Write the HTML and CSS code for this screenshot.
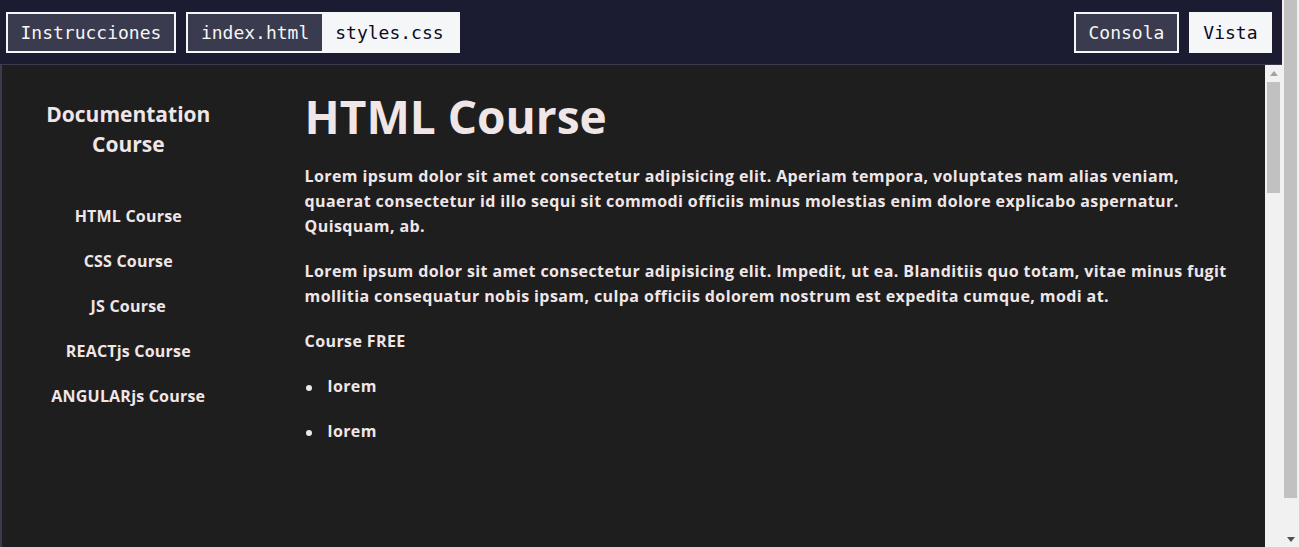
FILE: index.html
```html
<!DOCTYPE html>
<html lang="es">
<head>
<meta charset="utf-8">
<title>Documentation Course</title>
<link rel="stylesheet" href="styles.css">
</head>
<body>
<div class="app">
  <div class="workspace">
    <header class="topbar">
      <div class="group">
        <button class="btn btn-dark">Instrucciones</button>
        <div class="tabs">
          <span class="tab tab-dark">index.html</span>
          <span class="tab tab-light">styles.css</span>
        </div>
      </div>
      <div class="group">
        <button class="btn btn-dark">Consola</button>
        <button class="btn btn-light">Vista</button>
      </div>
    </header>
    <section class="preview">
      <div class="page">
        <aside class="sidebar">
          <h2 class="side-title">Documentation Course</h2>
          <ul class="side-nav">
            <li>HTML Course</li>
            <li>CSS Course</li>
            <li>JS Course</li>
            <li>REACTjs Course</li>
            <li>ANGULARjs Course</li>
          </ul>
        </aside>
        <main class="content">
          <h1 class="title">HTML Course</h1>
          <p>Lorem ipsum dolor sit amet consectetur adipisicing elit. Aperiam tempora, voluptates nam alias veniam, quaerat consectetur id illo sequi sit commodi officiis minus molestias enim dolore explicabo aspernatur. Quisquam, ab.</p>
          <p>Lorem ipsum dolor sit amet consectetur adipisicing elit. Impedit, ut ea. Blanditiis quo totam, vitae minus fugit mollitia consequatur nobis ipsam, culpa officiis dolorem nostrum est expedita cumque, modi at.</p>
          <p>Course FREE</p>
          <ul class="bullets">
            <li>lorem</li>
            <li>lorem</li>
          </ul>
        </main>
      </div>
      <div class="scrollbar scrollbar-inner">
        <div class="sb-btn sb-btn-top">
          <svg width="8" height="5" viewBox="0 0 8 5"><polygon points="0,5 8,5 4,0" fill="#a3a3a3"/></svg>
        </div>
        <div class="sb-thumb sb-thumb-inner"></div>
      </div>
    </section>
  </div>
  <div class="scrollbar scrollbar-outer">
    <div class="sb-thumb sb-thumb-outer"></div>
    <div class="sb-spacer"></div>
    <div class="sb-btn sb-btn-bottom">
      <svg width="8" height="5" viewBox="0 0 8 5"><polygon points="0,0 8,0 4,5" fill="#505050"/></svg>
    </div>
  </div>
</div>
</body>
</html>
```

FILE: styles.css
```css
* { box-sizing: border-box; }

html, body {
  margin: 0;
  padding: 0;
  height: 100%;
  overflow: hidden;
  background: #1b1b32;
}

.app {
  display: flex;
  height: 547px;
}

.workspace {
  flex: 1;
  display: flex;
  flex-direction: column;
  min-width: 0;
}

.topbar {
  height: 65px;
  flex: 0 0 65px;
  display: flex;
  align-items: center;
  justify-content: space-between;
  padding: 0 10px 0 6px;
  background: #1b1b32;
  border-bottom: 1px solid #3b3b4f;
}

.group {
  display: flex;
  align-items: center;
  gap: 10px;
}

.btn, .tab {
  font-family: "DejaVu Sans Mono", "Liberation Mono", monospace;
  font-size: 18px;
  line-height: 37px;
}

.btn {
  height: 41px;
  margin: 0;
  padding: 0 12.5px;
  border: 2px solid #f5f6f7;
  cursor: pointer;
}

.btn-dark { background: #3b3b4f; color: #f5f6f7; }
.btn-light { background: #f5f6f7; color: #0a0a23; }

.tabs {
  display: flex;
  height: 41px;
  border: 2px solid #f5f6f7;
}

.tab {
  display: block;
  padding: 0 13px;
}

.tab-dark { background: #3b3b4f; color: #f5f6f7; }
.tab-light { background: #f5f6f7; color: #0a0a23; padding-right: 14px; }

.preview {
  flex: 1;
  display: flex;
  min-height: 0;
  background: #1e1e1e;
  border-left: 2px solid #3b3b4f;
  color: #f0e6e8;
  font-family: "Open Sans", "Noto Sans", sans-serif;
  font-weight: 700;
}

.page {
  flex: 1;
  display: flex;
  min-width: 0;
}

.sidebar {
  flex: 0 0 20%;
  text-align: center;
  padding-top: 34px;
}

.side-title {
  margin: 0 auto;
  width: 200px;
  font-size: 21px;
  line-height: 30px;
  font-weight: 700;
}

.side-nav {
  list-style: none;
  margin: 45px 0 0;
  padding: 0;
  font-size: 16px;
  line-height: 25px;
  letter-spacing: 0.2px;
}

.side-nav li { margin-bottom: 20px; }

.content {
  flex: 1;
  min-width: 0;
  padding: 0 20px 0 50px;
  font-size: 16px;
  line-height: 25px;
}

.title {
  margin: 24px 0 20px;
  font-size: 46px;
  line-height: 55px;
  font-weight: 700;
}

.content p {
  margin: 20px 0;
  letter-spacing: 0.4px;
}

.bullets {
  margin: 20px 0;
  padding-left: 23px;
  list-style: none;
  letter-spacing: 0.4px;
}

.bullets li { margin-bottom: 20px; }

.bullets li::before {
  content: "";
  display: inline-block;
  width: 6px;
  height: 6px;
  border-radius: 50%;
  background: currentColor;
  margin-left: -22px;
  margin-right: 16px;
  vertical-align: middle;
}

.scrollbar {
  flex: 0 0 17px;
  display: flex;
  flex-direction: column;
  background: #f1f1f1;
}

.sb-btn {
  display: flex;
  align-items: center;
  justify-content: center;
}

.sb-btn-top { height: 17px; }
.sb-btn-bottom { height: 15px; }

.sb-thumb {
  margin: 0 2px;
  background: #c1c1c1;
}

.sb-thumb-inner { height: 111px; }
.sb-thumb-outer { height: 498px; }

.sb-spacer { flex: 1; }
```
